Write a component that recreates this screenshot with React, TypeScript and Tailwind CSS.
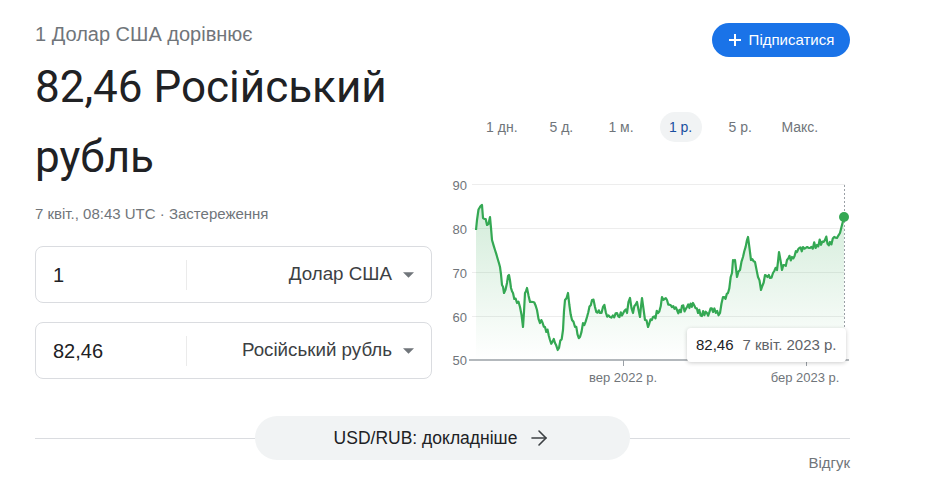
import React from 'react';
import { ArrowRight } from 'lucide-react';

const keyPoints: [number, number][] = [
  [476, 230], [477, 220], [480, 207], [482, 205], [483, 218], [487, 225], [490, 217],
  [492, 240], [495, 250], [498, 260], [500, 267], [502, 285], [504, 293], [507, 283],
  [509, 275], [511, 288], [513, 293], [517, 303], [520, 307], [523, 327], [525, 293],
  [527, 288], [530, 302], [533, 302], [537, 310], [540, 323], [545, 327], [550, 340],
  [555, 343], [559, 348], [563, 330], [565, 300], [568, 293], [572, 320], [575, 327],
  [580, 337], [583, 323], [587, 317], [592, 300], [595, 307], [600, 313], [603, 307],
  [610, 317], [617, 313], [627, 313], [630, 298], [633, 313], [637, 302], [640, 317],
  [642, 298], [645, 320], [648, 327], [653, 317], [658, 313], [662, 297], [667, 300],
  [672, 307], [677, 310], [687, 307], [693, 303], [698, 313], [707, 313], [713, 312],
  [720, 313], [723, 297], [728, 293], [732, 273], [733, 260], [735, 260], [737, 277],
  [740, 270], [743, 257], [747, 240], [748, 237], [751, 260], [755, 262], [758, 277],
  [761, 290], [765, 275], [770, 278], [773, 273], [777, 270], [779, 252], [782, 270],
  [787, 260], [792, 257], [797, 252], [803, 247], [810, 248], [817, 245], [825, 240],
  [830, 242], [837, 238], [840, 233], [844, 217],
];

function buildLine() {
  let seed = 11;
  const rnd = () => {
    seed = (seed * 16807) % 2147483647;
    return seed / 2147483647;
  };
  const pts: [number, number][] = [keyPoints[0]];
  for (let i = 1; i < keyPoints.length; i++) {
    const [x0, y0] = keyPoints[i - 1];
    const [x1, y1] = keyPoints[i];
    const n = Math.max(1, Math.round((x1 - x0) / 1.3));
    for (let s = 1; s <= n; s++) {
      const t = s / n;
      const jitter = s === n || i === keyPoints.length - 1 ? 0 : (rnd() - 0.5) * 8;
      pts.push([x0 + (x1 - x0) * t, y0 + (y1 - y0) * t + jitter]);
    }
  }
  return pts;
}

const linePts = buildLine();
const lineD = linePts.map((p, i) => `${i ? 'L' : 'M'}${p[0].toFixed(1)},${p[1].toFixed(1)}`).join(' ');
const areaD = `${lineD} L844,360 L476,360 Z`;

const ranges = ['1 дн.', '5 д.', '1 м.', '1 р.', '5 р.', 'Макс.'];

function Caret() {
  return (
    <svg width="11" height="6" viewBox="0 0 10 5" className="shrink-0">
      <polygon points="0,0 10,0 5,5" fill="#70757a" />
    </svg>
  );
}

function CurrencyRow({ value, currency }: { value: string; currency: string }) {
  return (
    <div className="flex h-[57px] items-center rounded-lg border border-[#dadce0]">
      <div className="w-[150px] pl-[17px] text-[20px] text-[#202124]">{value}</div>
      <div className="h-[30px] w-px bg-[#ebebeb]" />
      <div className="flex flex-1 items-center justify-end gap-[11px] pr-[17px] text-[18.75px] text-[#3c4043]">
        <span>{currency}</span>
        <Caret />
      </div>
    </div>
  );
}

function Chart() {
  return (
    <div className="relative h-[250px]">
      <svg width="418" height="250" className="block">
        <defs>
          <linearGradient id="fillGrad" gradientUnits="userSpaceOnUse" x1="0" y1="205" x2="0" y2="360">
            <stop offset="0" stopColor="#34a853" stopOpacity="0.22" />
            <stop offset="1" stopColor="#34a853" stopOpacity="0" />
          </linearGradient>
        </defs>
        <g transform="translate(-432,-142)" fontFamily="'Liberation Sans', Arial, sans-serif" fontSize="13" fill="#70757a">
          {[184, 228, 272, 316].map((y) => (
            <line key={y} x1="472" x2="845" y1={y + 0.5} y2={y + 0.5} stroke="#ededed" strokeWidth="1" />
          ))}
          {[['90', 185], ['80', 229], ['70', 273], ['60', 317], ['50', 360]].map(([t, y]) => (
            <text key={t} x="467" y={y} textAnchor="end" dominantBaseline="central">{t}</text>
          ))}
          <path d={areaD} fill="url(#fillGrad)" />
          <line x1="844.5" x2="844.5" y1="185" y2="360" stroke="#9aa0a6" strokeWidth="1" strokeDasharray="2 2" />
          <path d={lineD} fill="none" stroke="#34a853" strokeWidth="2.2" strokeLinejoin="round" />
          <line x1="469" x2="849" y1="360" y2="360" stroke="#9aa0a6" strokeWidth="1.5" />
          <line x1="623.5" x2="623.5" y1="360" y2="366" stroke="#9aa0a6" strokeWidth="1" />
          <line x1="806.5" x2="806.5" y1="360" y2="366" stroke="#9aa0a6" strokeWidth="1" />
          <text x="623" y="377" textAnchor="middle" dominantBaseline="central">вер 2022 р.</text>
          <text x="805" y="377" textAnchor="middle" dominantBaseline="central">бер 2023 р.</text>
          <circle cx="844" cy="217" r="5" fill="#34a853" />
        </g>
      </svg>
      <div className="absolute left-[255px] top-[186px] flex h-[34px] w-[159px] items-center gap-[9px] rounded bg-white px-[9px] text-[15px] shadow-[0_1px_4px_rgba(0,0,0,0.2)]">
        <span className="text-[#202124]">82,46</span>
        <span className="text-[#5f6368]">7 квіт. 2023 р.</span>
      </div>
    </div>
  );
}

export default function App() {
  return (
    <div className="min-h-[491px] w-[936px] bg-white font-['Liberation_Sans',Arial,sans-serif]">
      <div className="ml-[35px] w-[815px]">
        <div className="flex">
          <div className="w-[397px]">
            <div className="pt-[20px] text-[20px] leading-[28px] text-[#70757a]">1 Долар США дорівнює</div>
            <div className="mt-[4px] font-['Roboto',sans-serif] text-[44px] leading-[70px] text-[#202124]">
              82,46 Російський рубль
            </div>
            <div className="mt-[12px] text-[15px] leading-[20px] text-[#70757a]">
              7 квіт., 08:43 UTC · Застереження
            </div>
            <div className="mt-[22px] flex flex-col gap-[19px]">
              <CurrencyRow value="1" currency="Долар США" />
              <CurrencyRow value="82,46" currency="Російський рубль" />
            </div>
          </div>
          <div className="flex-1">
            <div className="flex justify-end pt-[23px]">
              <button className="flex h-[34px] w-[138px] items-center justify-center gap-[7px] rounded-full bg-[#1a73e8] text-[15px] text-white">
                <svg width="14" height="14" viewBox="0 0 14 14">
                  <path d="M7 1v12M1 7h12" stroke="white" strokeWidth="2" />
                </svg>
                Підписатися
              </button>
            </div>
            <div className="mt-[55px] flex pl-[40px]">
              {ranges.map((r) => (
                <div key={r} className="flex w-[59.6px] justify-center">
                  <span
                    className={
                      r === '1 р.'
                        ? 'flex h-[30px] w-[42px] items-center justify-center rounded-full bg-[#f1f3f4] text-[14px] text-[#1a4fa0]'
                        : 'flex h-[30px] items-center text-[14px] text-[#70757a]'
                    }
                  >
                    {r}
                  </span>
                </div>
              ))}
            </div>
            <Chart />
          </div>
        </div>
        <div className="mt-[24px] flex h-[44px] items-center">
          <div className="h-px flex-1 bg-[#dadce0]" />
          <div className="flex h-[44px] w-[375px] items-center justify-center gap-[10px] rounded-full bg-[#f1f3f4] text-[17.5px] text-[#202124]">
            <span>USD/RUB: докладніше</span>
            <ArrowRight size={24} strokeWidth={1.6} className="text-[#3c4043]" />
          </div>
          <div className="h-px flex-1 bg-[#dadce0]" />
        </div>
        <div className="-mt-[7px] text-right text-[15px] leading-[20px] text-[#70757a]">Відгук</div>
      </div>
    </div>
  );
}
